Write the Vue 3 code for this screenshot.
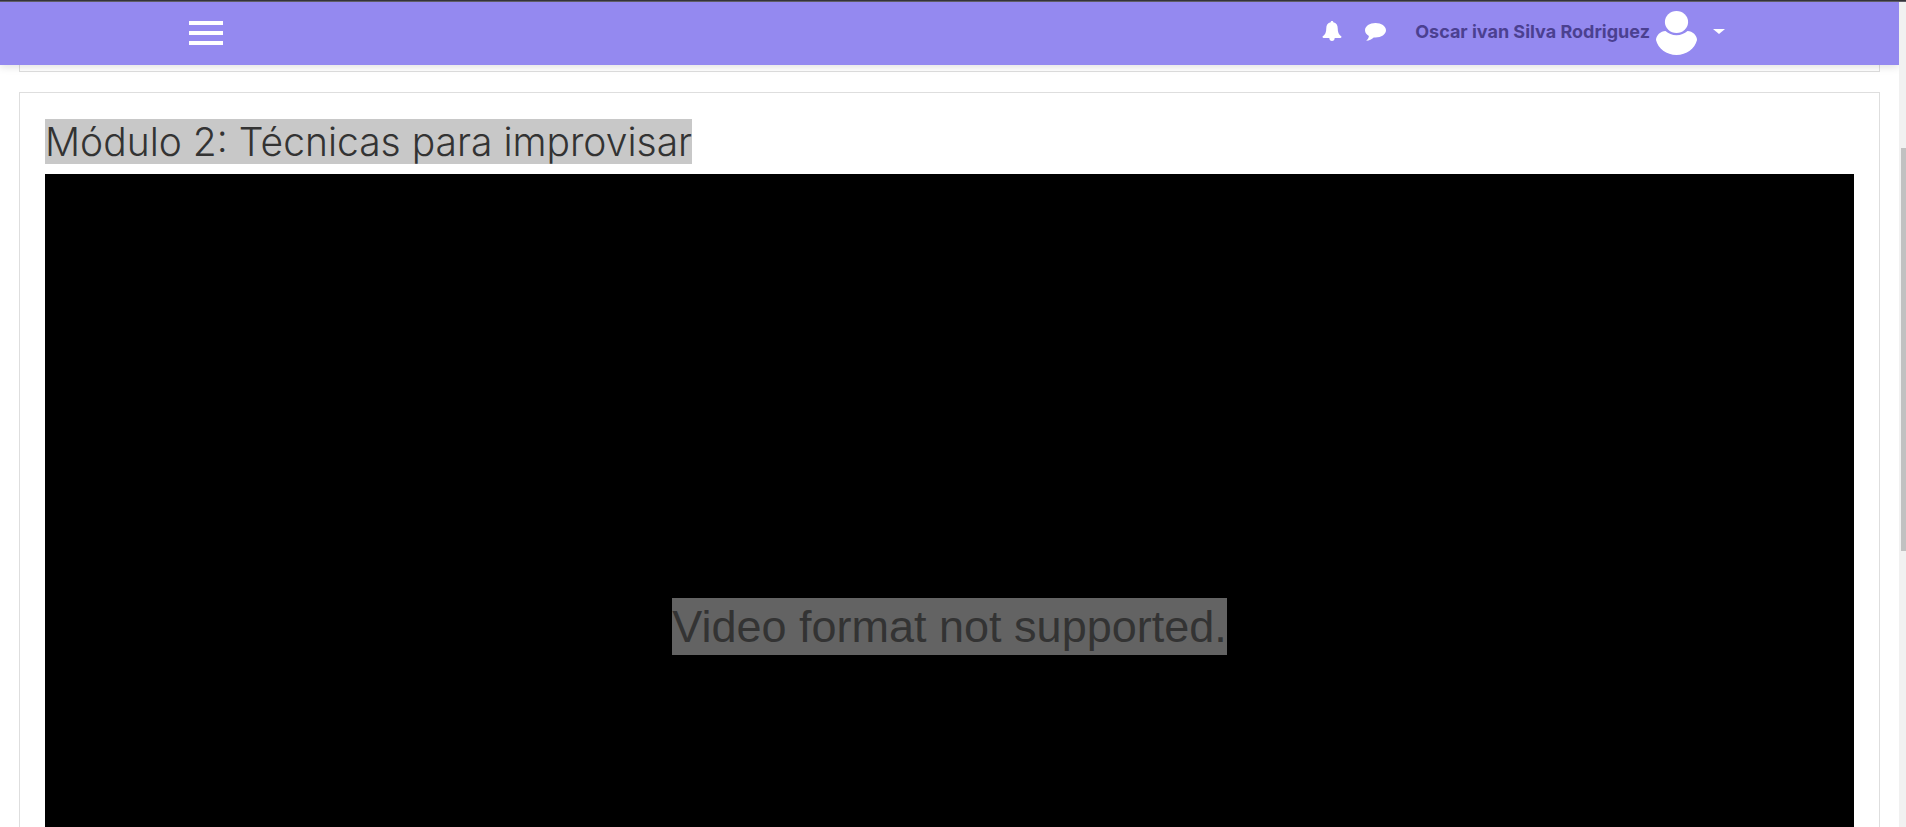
<template>
  <div class="window">
    <div class="window-edge"></div>
    <div class="viewport">
      <div class="page">
        <header class="navbar">
          <button type="button" class="menu-toggle" aria-label="Menú">
            <span class="menu-bar"></span>
            <span class="menu-bar"></span>
            <span class="menu-bar"></span>
          </button>
          <nav class="user-nav">
            <button type="button" class="icon-button" aria-label="Notificaciones">
              <svg width="20" height="20" viewBox="0 0 20 20" fill="#fff">
                <path d="M10 0C10.800 0 11.300.5 11.300 1.300C14.300 2 15.700 4.200 15.700 7C15.700 11.200 16.700 13.700 19.500 15.500Q19.500 17 18.200 17H12.700C12.700 18.800 11.500 20 10 20S7.300 18.800 7.300 17H1.800Q.5 17 .5 15.500C3.300 13.700 4.300 11.200 4.300 7C4.300 4.200 5.700 2 8.700 1.300C8.700.5 9.200 0 10 0Z" />
              </svg>
            </button>
            <button type="button" class="icon-button" aria-label="Mensajes">
              <svg width="21" height="20" viewBox="0 0 21 20" fill="#fff">
                <path d="M10.500 2C16.300 2 21 5.200 21 9.300S16.300 16.500 10.500 16.500L8.700 16.400C6.700 18.200 4.400 19.400 1.200 19.700C2.600 18.400 3.700 17.200 3.900 15C1.500 13.700 0 11.600 0 9.300C0 5.200 4.700 2 10.500 2Z" />
              </svg>
            </button>
            <button type="button" class="user-menu">
              <span class="user-name">{{ userName }}</span>
              <svg class="avatar" width="41" height="44" viewBox="0 0 41 44" fill="#fff">
                <ellipse cx="20.500" cy="11" rx="11.600" ry="11" />
                <path d="M9.500 20C4.500 20 0 24.500 0 29C2 37.500 10.500 44 20.500 44S39 37.500 41 29C41 24.500 36.500 20 31.500 20C28.500 22.700 24.800 24.200 20.500 24.200S12.500 22.700 9.500 20Z" />
              </svg>
              <span class="caret"></span>
            </button>
          </nav>
        </header>
        <main class="content">
          <section class="card card-previous"></section>
          <section class="card card-module">
            <h2 class="module-title"><span class="title-selection">{{ title }}</span></h2>
            <div class="video">
              <span class="video-message">{{ videoMessage }}</span>
            </div>
          </section>
        </main>
      </div>
      <div class="scrollbar">
        <div class="scrollbar-thumb"></div>
      </div>
    </div>
  </div>
</template>

<script setup>
const userName = 'Oscar ivan Silva Rodriguez'
const title = 'Módulo 2: Técnicas para improvisar'
const videoMessage = 'Video format not supported.'
</script>

<style>
body {
  margin: 0;
  background: #fff;
}
</style>

<style scoped>
.window {
  height: 100vh;
  display: flex;
  flex-direction: column;
  overflow: hidden;
  color: #333;
  font-family: "Century Gothic", Inter, sans-serif;
}

.window-edge {
  flex: none;
  height: 1px;
  background: #35343a;
  border-bottom: 1px solid #5f5d66;
}

.viewport {
  flex: 1;
  min-height: 0;
  display: flex;
}

.page {
  flex: 1;
  min-width: 0;
  overflow: hidden;
}

.navbar {
  position: relative;
  display: flex;
  align-items: center;
  justify-content: space-between;
  height: 63px;
  padding: 0 174px 2px 189px;
  box-sizing: border-box;
  background: #9489f0;
  box-shadow: 0 2px 8px rgba(0, 0, 0, 0.12);
}

button {
  padding: 0;
  border: 0;
  background: none;
  font-family: inherit;
  cursor: pointer;
}

.menu-toggle {
  display: flex;
  flex-direction: column;
  gap: 6px;
  width: 34px;
}

.menu-bar {
  height: 4px;
  background: #fff;
}

.user-nav {
  display: flex;
  align-items: center;
}

.icon-button {
  display: flex;
  margin: 0 23px 4px 0;
}

.user-menu {
  display: flex;
  align-items: center;
}

.user-name {
  padding-bottom: 2px;
  margin: 0 6px;
  color: #4b4090;
  font-size: 18px;
  font-weight: 700;
  line-height: 24px;
  white-space: nowrap;
}

.caret {
  margin: 0 0 2px 16px;
  border-top: 5px solid #fff;
  border-left: 6px solid transparent;
  border-right: 6px solid transparent;
}

.content {
  padding: 0 19px;
}

.card {
  border: 1px solid #dedede;
}

.card-previous {
  height: 6px;
  border-top: 0;
  margin-bottom: 20px;
}

.card-module {
  padding: 26px 25px;
}

.module-title {
  margin: 0 0 10px;
  font-size: 39px;
  font-weight: 300;
  line-height: 45px;
}

.title-selection {
  display: inline-block;
  vertical-align: top;
  background: #c8c8c8;
}

.video {
  display: flex;
  align-items: center;
  justify-content: center;
  aspect-ratio: 2 / 1;
  background: #000;
}

.video-message {
  background: #636363;
  font-family: "Liberation Sans", Arial, sans-serif;
  font-size: 45px;
  line-height: 57px;
}

.scrollbar {
  flex: none;
  width: 5px;
  padding: 146px 0 0 2px;
  background: #f1f1f1;
}

.scrollbar-thumb {
  height: 403px;
  background: #c1c1c1;
}
</style>
